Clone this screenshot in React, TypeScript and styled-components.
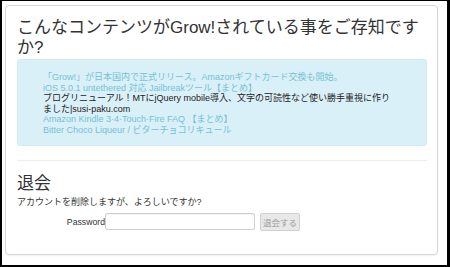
import styled, { createGlobalStyle } from "styled-components";

const GlobalStyle = createGlobalStyle`
  html, body {
    margin: 0;
    padding: 0;
    background: #fff;
  }
  body {
    font-family: "Liberation Sans", "Noto Sans CJK JP", sans-serif;
    color: #333;
  }
`;

const Frame = styled.div`
  width: 450px;
  height: 267px;
  box-sizing: border-box;
  border-style: solid;
  border-color: #000;
  border-width: 1px 3px 2px 2px;
  background: #fff;
  padding: 4px 0 0 3px;
`;

const Card = styled.div`
  width: 433px;
  height: 250px;
  box-sizing: border-box;
  border: 1px solid #d6d6d6;
  border-radius: 4px;
  box-shadow: 0 1px 2px rgba(0, 0, 0, 0.06);
  padding: 12px 10px 0 11px;
`;

const Title = styled.h2`
  margin: 0 0 2px;
  font-size: 17px;
  line-height: 19.5px;
  font-weight: 400;
  color: #333;
`;

const Alert = styled.div`
  background: #daf0f8;
  border: 1px solid #d1ebf4;
  border-radius: 3px;
  padding: 12px 30px 9px 8px;
`;

const LinkList = styled.ul`
  list-style: none;
  margin: 0;
  padding: 0 0 0 17px;
  font-size: 9px;
  line-height: 10.6px;
`;

const Entry = styled.li<{ $plain?: boolean }>`
  color: ${(p) => (p.$plain ? "#222" : "#74c1d7")};
`;

const Rule = styled.hr`
  border: 0;
  border-top: 1px solid #eeeeee;
  margin: 14px 0 13px;
`;

const SectionTitle = styled.h3`
  margin: 0 0 3px;
  font-size: 17px;
  line-height: 20px;
  font-weight: 400;
  color: #333;
`;

const Note = styled.p`
  margin: 0 0 5px;
  font-size: 9px;
  line-height: 11px;
  color: #333;
`;

const FormRow = styled.form`
  display: flex;
  align-items: center;
  height: 18px;
`;

const Label = styled.label`
  width: 88px;
  text-align: right;
  font-size: 8.7px;
  color: #333;
`;

const Input = styled.input`
  width: 150px;
  height: 17px;
  box-sizing: border-box;
  border: 1px solid #cfcfcf;
  border-radius: 2px;
  margin: 0;
  padding: 0 3px;
  box-shadow: inset 0 1px 1px rgba(0, 0, 0, 0.06);
`;

const Button = styled.button`
  margin-left: 5px;
  width: 40px;
  height: 18px;
  box-sizing: border-box;
  padding: 0;
  border: 1px solid #d0d0d0;
  border-radius: 2px;
  background: #e8e8e8;
  color: #9a9a9a;
  font-family: "Liberation Sans", "Noto Sans CJK JP", sans-serif;
  font-size: 8.5px;
`;

const entries = [
  { text: "「Grow!」が日本国内で正式リリース。Amazonギフトカード交換も開始。" },
  { text: "iOS 5.0.1 untethered 対応 Jailbreakツール【まとめ】" },
  {
    text: "ブログリニューアル！MTにjQuery mobile導入、文字の可読性など使い勝手重視に作りました|susi-paku.com",
    plain: true,
  },
  { text: "Amazon Kindle 3·4·Touch·Fire FAQ 【まとめ】" },
  { text: "Bitter Choco Liqueur / ビターチョコリキュール" },
];

export default function App() {
  return (
    <>
      <GlobalStyle />
      <Frame>
        <Card>
          <Title>こんなコンテンツがGrow!されている事をご存知ですか?</Title>
          <Alert>
            <LinkList>
              {entries.map((e, i) => (
                <Entry key={i} $plain={e.plain}>
                  {e.text}
                </Entry>
              ))}
            </LinkList>
          </Alert>
          <Rule />
          <SectionTitle>退会</SectionTitle>
          <Note>アカウントを削除しますが、よろしいですか?</Note>
          <FormRow onSubmit={(ev) => ev.preventDefault()}>
            <Label>Password</Label>
            <Input type="password" />
            <Button type="button">退会する</Button>
          </FormRow>
        </Card>
      </Frame>
    </>
  );
}
